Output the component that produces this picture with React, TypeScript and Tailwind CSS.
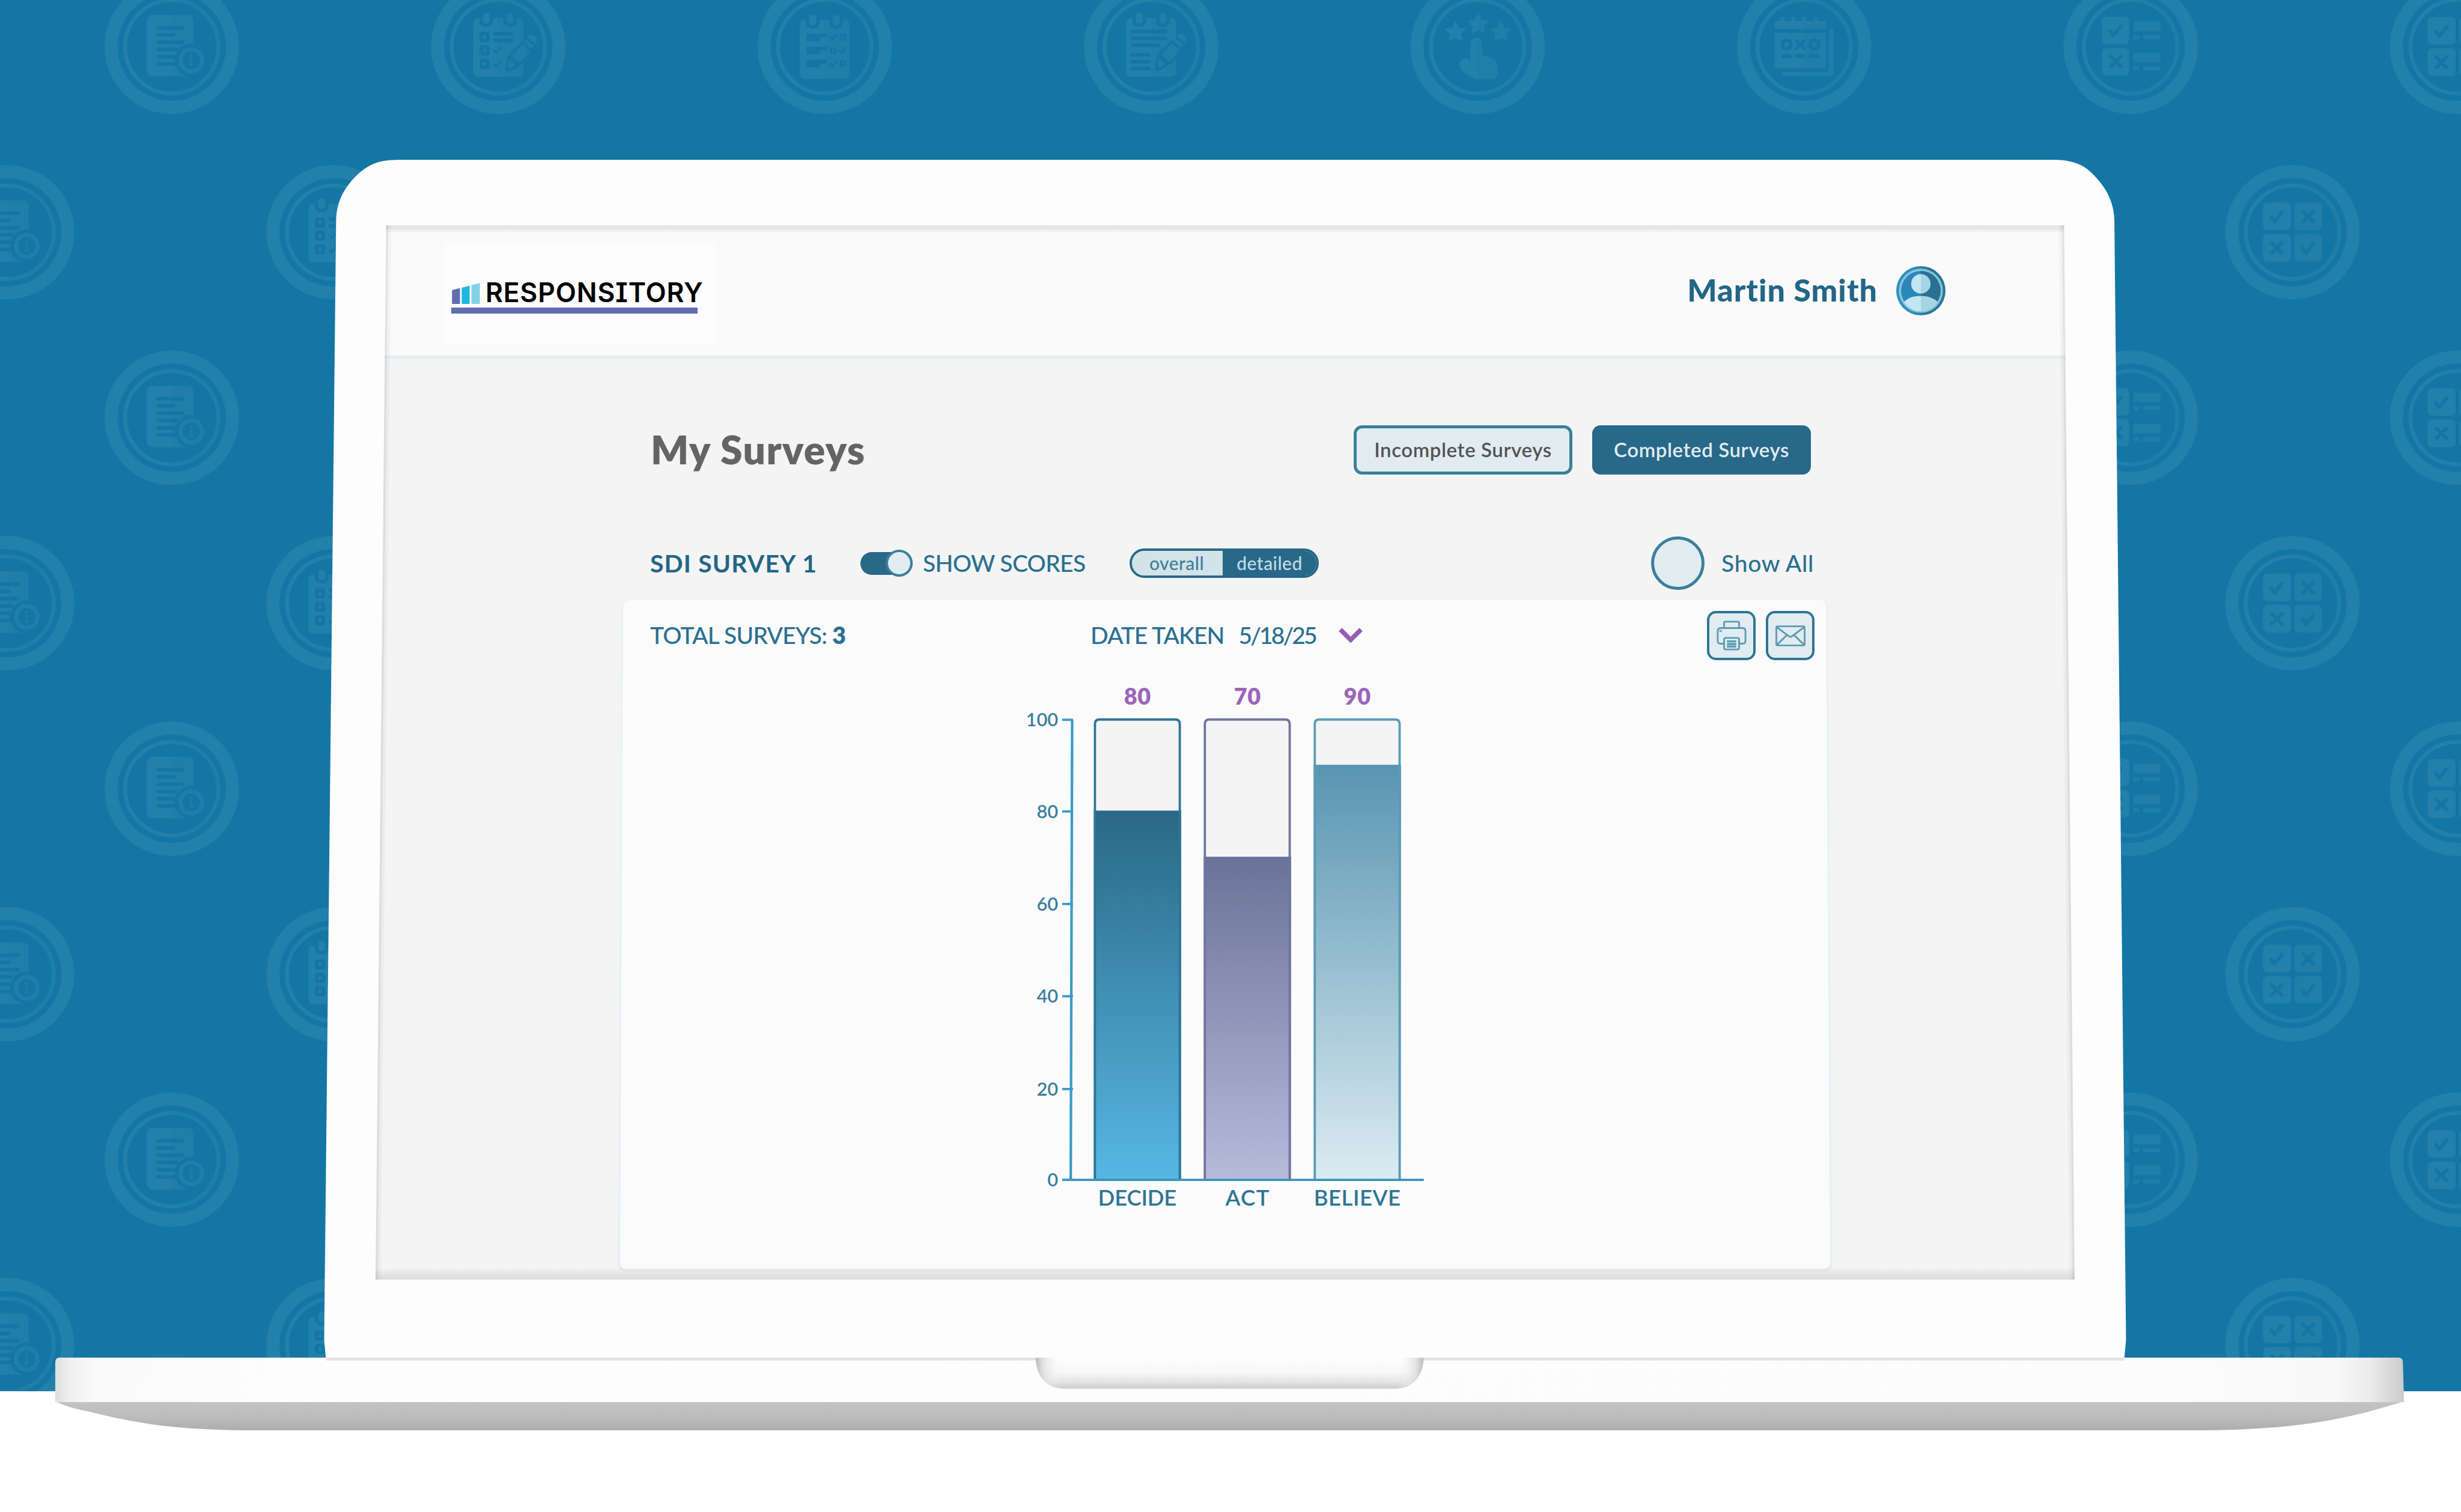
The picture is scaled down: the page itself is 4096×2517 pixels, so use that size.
import type { ReactNode } from "react";

const BG = "#1476a4";
const MARK = "#2380aa";

/* ---------- background badges ---------- */

function Check({ x, y, s = 1 }: { x: number; y: number; s?: number }) {
  return (
    <path
      d={`M${x - 10 * s} ${y + 1 * s}l${6 * s} ${8 * s}l${13 * s} ${-16 * s}`}
      fill="none"
      stroke={BG}
      strokeWidth={6 * s}
      strokeLinecap="round"
      strokeLinejoin="round"
    />
  );
}

function Cross({ x, y, s = 1 }: { x: number; y: number; s?: number }) {
  return (
    <path
      d={`M${x - 9 * s} ${y - 9 * s}l${18 * s} ${18 * s}M${x + 9 * s} ${y - 9 * s}l${-18 * s} ${18 * s}`}
      fill="none"
      stroke={BG}
      strokeWidth={6 * s}
      strokeLinecap="round"
    />
  );
}

function Line({ x, y, w, h = 6.4 }: { x: number; y: number; w: number; h?: number }) {
  return <rect x={x} y={y} width={w} height={h} rx="2.5" fill={BG} />;
}

function Box({ x, y }: { x: number; y: number }) {
  return (
    <>
      <rect x={x - 9} y={y - 9} width="18" height="18" rx="4.5" fill={BG} />
      <rect x={x - 3} y={y - 3} width="6" height="6" rx="1" fill={MARK} />
    </>
  );
}

function Pad({ y, children }: { y: number; children: ReactNode }) {
  return (
    <>
      <rect x="-44" y={y} width="88" height="103" rx="8" fill={MARK} />
      {[-21, 20.5].map((x) => (
        <g key={x}>
          <rect x={x - 12} y={y - 9} width="24" height="24" rx="10" fill={BG} />
          <rect x={x - 6} y={y - 9} width="12" height="18.5" rx="5" fill={MARK} />
        </g>
      ))}
      {children}
    </>
  );
}

function Pencil() {
  return (
    <>
      <path d="M14 43Q12 40 13 34L16 16L44 -11L62 8L42 31L24 42Q17 45 14 43Z" fill={BG} />
      <g fill={MARK}>
        <path d="M18.5 22L31 32L20 39Q18 40 18 37Z" />
        <path d="M23 17L38 29L56 8L43 -5Z" />
        <path d="M43.5 -8.7L48 -13L62 -2L59 3.3Z" />
        <path d="M51 -16L54 -20Q59 -24 65 -18Q70 -12 65.5 -5Z" />
      </g>
    </>
  );
}

function InfoDoc() {
  return (
    <>
      <rect x="-44" y="-56" width="82" height="108" rx="10" fill={MARK} />
      <Line x={-27} y={-36.5} w={49} />
      <Line x={-27} y={-24} w={33} />
      <Line x={-27} y={-11} w={49} />
      <Line x={-27} y={1.5} w={38} />
      <Line x={-27} y={14.5} w={33} />
      <Line x={-27} y={27} w={38} />
      <circle cx="34.3" cy="24" r="29" fill={BG} />
      <circle cx="34.3" cy="24" r="19" fill="none" stroke={MARK} strokeWidth="7.5" />
      <circle cx="34" cy="16" r="2.5" fill={MARK} />
      <path d="M31 22.5h3.5v9M30.5 32h7" stroke={MARK} strokeWidth="3" fill="none" />
    </>
  );
}

function PencilChecklist() {
  return (
    <Pad y={-50}>
      {[-17, 6.5, 30].map((y) => (
        <Box key={y} x={-23.8} y={y} />
      ))}
      <Line x={-8.8} y={-26} w={35} />
      <Line x={-8.8} y={-14.3} w={35} />
      <Check x={-1.5} y={6} s={0.55} />
      <Check x={-1.5} y={30} s={0.55} />
      <Pencil />
    </Pad>
  );
}

function Checklist() {
  return (
    <Pad y={-47}>
      {[0, 23, 46].map((dy, i) => (
        <g key={dy}>
          <Line x={-32} y={-23 + dy} w={36} />
          <Line x={-32} y={-16.3 + dy} w={24} />
          <Check x={(i === 1 ? 32 : 16) - 0.5} y={-17 + dy} s={0.55} />
          <rect
            x={i === 1 ? 11.5 : 28}
            y={-20.5 + dy}
            width="8"
            height="8"
            rx="2"
            fill="none"
            stroke={BG}
            strokeWidth="3"
          />
        </g>
      ))}
    </Pad>
  );
}

function NotePencil() {
  return (
    <Pad y={-50}>
      <Line x={-36} y={-30} w={64} />
      <Line x={-36} y={-18} w={64} />
      <Line x={-36} y={-6} w={51} />
      <Line x={-36} y={11} w={35} />
      <Line x={-36} y={23} w={35} />
      <Line x={-36} y={35} w={35} />
      <g transform="translate(-6 -2)">
        <Pencil />
      </g>
    </Pad>
  );
}

function StarsHand() {
  return (
    <g fill={MARK} stroke={MARK} strokeWidth="3" strokeLinejoin="round">
      {[
        [1, -40],
        [-39, -26.5],
        [41, -26.5],
      ].map(([x, y]) => (
        <path
          key={x}
          transform={`translate(${x} ${y})`}
          d="M0 -16L5 -5.5L16.5 -4.5L8 3.5L10.5 15L0 9.5L-10.5 15L-8 3.5L-16.5 -4.5L-5 -5.5Z"
        />
      ))}
      <path
        strokeWidth="0"
        d="M-13 26V-5A10.5 10.5 0 0 1 8 -5V15C24 18 35 22 35 35V46Q34 53 28 57H-5C-14 52 -32 42 -32 32C-32 18 -17 18 -13 26Z"
      />
    </g>
  );
}

function CalendarMark() {
  return (
    <>
      <g fill={MARK}>
        {[-41.6, -22.6, -2.7, 17].map((x) => (
          <rect key={x} x={x} y="-52" width="6.5" height="9" />
        ))}
        <rect x="-51.6" y="-45" width="90" height="14" rx="1" />
        <rect x="-51.6" y="-24.5" width="90" height="62" rx="2" />
        <path d="M43.5 -32H51V46Q51 51 46 51H-38V44H39Q43.5 44 43.5 39Z" />
      </g>
      {[-31, 18].map((x) => (
        <rect key={x} x={x - 7} y="-11" width="14" height="14" rx="4" fill="none" stroke={BG} strokeWidth="6" />
      ))}
      <Cross x={-7} y={-4} s={0.8} />
      {[-40, -17, 8].map((x) => (
        <Line key={x} x={x} y={13.5} w={19} />
      ))}
    </>
  );
}

function CheckList() {
  return (
    <>
      <g fill={MARK}>
        {[-52.7, 2].map((y) => (
          <g key={y}>
            <rect x="-50.7" y={y} width="48" height="48.5" rx="8" />
            <rect x="5.4" y={y + 8.5} width="47" height="17" rx="1.5" />
            <rect x="5.4" y={y + 32.5} width="10" height="7" rx="1.5" />
            <rect x="21.7" y={y + 32.5} width="31" height="7" rx="1.5" />
          </g>
        ))}
      </g>
      <Check x={-26} y={-29} />
      <Cross x={-26} y={26} />
    </>
  );
}

function GridMark() {
  return (
    <>
      <g fill={MARK}>
        <rect x="-51.6" y="-52" width="49" height="48.5" rx="8" />
        <rect x="3" y="-52" width="49" height="48.5" rx="8" />
        <rect x="-51.6" y="3" width="49" height="48.5" rx="8" />
        <rect x="3" y="3" width="49" height="48.5" rx="8" />
      </g>
      <Check x={-27.5} y={-27.5} />
      <Cross x={27.5} y={-27.5} />
      <Cross x={-27.5} y={27.5} />
      <Check x={27.5} y={27.5} />
    </>
  );
}

const badges = [InfoDoc, PencilChecklist, Checklist, NotePencil, StarsHand, CalendarMark, CheckList, GridMark];

function Backdrop() {
  return (
    <svg className="absolute inset-x-0 top-0 h-[2316px] w-[4096px]" viewBox="0 0 4320 2442" preserveAspectRatio="none">
      <rect width="4320" height="2442" fill={BG} />
      {Array.from({ length: 8 }, (_, row) =>
        badges.map((Badge, col) => (
          <g
            key={`${row}-${col}`}
            transform={`translate(${(row % 2 ? 12.5 : 301.5) + 573.1 * col} ${82 + 325.6 * row})`}
          >
            <circle r="106.5" fill="none" stroke={MARK} strokeWidth="23" />
            <circle r="82" fill="none" stroke={MARK} strokeWidth="7" />
            <Badge />
            <path d="M0 -95A95 95 0 0 1 0 95Z" fill={BG} opacity="0.2" />
          </g>
        ))
      )}
    </svg>
  );
}

/* ---------- laptop ---------- */

function Laptop() {
  return (
    <svg className="absolute inset-0 h-[2517px] w-[4096px]" viewBox="0 0 4320 2655" preserveAspectRatio="none">
      <defs>
        <linearGradient id="under" x1="0" y1="0" x2="0" y2="1">
          <stop offset="0" stopColor="#c3c3c3" />
          <stop offset="0.5" stopColor="#bdbdbd" />
          <stop offset="1" stopColor="#adadad" />
        </linearGradient>
        <linearGradient id="deck" gradientUnits="userSpaceOnUse" x1="97" y1="0" x2="4219" y2="0">
          <stop offset="0" stopColor="#dedede" />
          <stop offset="0.006" stopColor="#efefef" />
          <stop offset="0.018" stopColor="#fafafa" />
          <stop offset="0.1" stopColor="#fdfdfd" />
          <stop offset="0.9" stopColor="#fcfcfc" />
          <stop offset="0.972" stopColor="#f8f8f8" />
          <stop offset="0.986" stopColor="#ebebeb" />
          <stop offset="1" stopColor="#cbcbcb" />
        </linearGradient>
        <linearGradient id="notch" x1="0" y1="0" x2="0" y2="1">
          <stop offset="0" stopColor="#fdfdfd" />
          <stop offset="0.45" stopColor="#f8f8f8" />
          <stop offset="0.75" stopColor="#e6e6e6" />
          <stop offset="1" stopColor="#cdcdcd" />
        </linearGradient>
        <linearGradient id="notchSides" x1="0" y1="0" x2="1" y2="0">
          <stop offset="0" stopColor="#b8b8b8" />
          <stop offset="0.02" stopColor="#d8d8d8" stopOpacity="0.7" />
          <stop offset="0.065" stopColor="#fafafa" stopOpacity="0" />
          <stop offset="0.935" stopColor="#fafafa" stopOpacity="0" />
          <stop offset="0.98" stopColor="#d8d8d8" stopOpacity="0.7" />
          <stop offset="1" stopColor="#b8b8b8" />
        </linearGradient>
      </defs>
      <path
        d="M698 280.5H3606C3640 281 3658 290 3672 304C3695 326 3710 352 3711.5 384L3732 2353L3729 2385H572L569 2353L590 384C592 350 607 324 634 301C652 286 670 281 698 280.5Z"
        fill="#fdfdfd"
      />
      <path
        d="M97 2461C123 2473 140 2475 161 2480C192 2488 222 2494 253 2499C310 2508 380 2511.5 440 2511.5H3873C3940 2511 4000 2507 4059 2499C4092 2494 4123 2488 4154 2480C4178 2473 4200 2467 4220 2461Z"
        fill="url(#under)"
      />
      <path d="M103 2384H4212Q4218 2385 4218 2393L4220 2462H97V2393Q97 2385 103 2384Z" fill="url(#deck)" />
      <path d="M572 2384H3729V2389H572Z" fill="#e2e2e2" />
      <path d="M1818 2384H2499C2499 2406 2488 2438 2449 2438.5H1868C1829 2438 1818 2406 1818 2384Z" fill="url(#notch)" />
      <path d="M1818 2384H2499C2499 2406 2488 2438 2449 2438.5H1868C1829 2438 1818 2406 1818 2384Z" fill="url(#notchSides)" />
    </svg>
  );
}

function ScreenShade() {
  return (
    <svg className="pointer-events-none absolute inset-0 h-full w-full" viewBox="0 0 2983 1850" preserveAspectRatio="none">
      <defs>
        <linearGradient id="shadeTop" x1="0" y1="0" x2="0" y2="1">
          <stop offset="0" stopColor="#000" stopOpacity="0.09" />
          <stop offset="0.4" stopColor="#000" stopOpacity="0.08" />
          <stop offset="1" stopColor="#000" stopOpacity="0" />
        </linearGradient>
        <linearGradient id="shadeBottom" x1="0" y1="1" x2="0" y2="0">
          <stop offset="0" stopColor="#000" stopOpacity="0.1" />
          <stop offset="0.35" stopColor="#000" stopOpacity="0.07" />
          <stop offset="1" stopColor="#000" stopOpacity="0" />
        </linearGradient>
      </defs>
      <rect width="2983" height="14" fill="url(#shadeTop)" />
      <rect y="1828" width="2983" height="22" fill="url(#shadeBottom)" />
      <path d="M18.5 0L0 1850" stroke="#000" strokeOpacity="0.03" strokeWidth="18" />
      <path d="M18.5 0L0 1850" stroke="#000" strokeOpacity="0.06" strokeWidth="8" />
      <path d="M2964.5 0L2983 1850" stroke="#000" strokeOpacity="0.03" strokeWidth="18" />
      <path d="M2964.5 0L2983 1850" stroke="#000" strokeOpacity="0.06" strokeWidth="8" />
    </svg>
  );
}

/* ---------- app ---------- */

function Logo() {
  return (
    <div className="ml-[115px] mt-[10px] flex h-[164px] w-[451px] flex-col bg-[#fdfdfd] pl-[12px] pt-[61px]">
      <div className="flex h-[38px] items-end">
        <svg className="h-[35px] w-[47px] shrink-0" viewBox="0 0 147 111">
          <path d="M0 38L42 27V111H0Z" fill="#5f6db3" />
          <path d="M51 25L93 14V111H51Z" fill="#20b5e2" />
          <path d="M102 12L147 0V111H102Z" fill="#86d0e6" />
        </svg>
        <span className="ml-[9px] whitespace-nowrap font-['Inter',sans-serif] text-[44.5px] font-semibold leading-[37px] tracking-[0.8px] text-black [font-feature-settings:'ss02']">
          RESPONSITORY
        </span>
      </div>
      <div className="-ml-[1px] mt-[6px] h-[10px] w-[410px] bg-[#5f6db3]" />
    </div>
  );
}

function Avatar() {
  return (
    <svg className="h-[82px] w-[82px]" viewBox="0 0 86 86">
      <defs>
        <clipPath id="avatarInner">
          <circle cx="43" cy="43" r="36" />
        </clipPath>
        <linearGradient id="avatarRim" x1="0" y1="0" x2="1" y2="0">
          <stop offset="0.3" stopColor="#2f90be" />
          <stop offset="0.7" stopColor="#2a7594" />
        </linearGradient>
      </defs>
      <circle cx="43" cy="43" r="43" fill="url(#avatarRim)" />
      <circle cx="43" cy="43" r="38.5" fill="#86c3d9" />
      <circle cx="43" cy="43" r="34.5" fill="#2a87b8" />
      <path d="M43 8.5A34.5 34.5 0 0 1 43 77.5Z" fill="#297092" />
      <g clipPath="url(#avatarInner)">
        <path d="M43 14A17 17 0 0 0 43 48Z" fill="#c2e6f2" />
        <path d="M43 14A17 17 0 0 1 43 48Z" fill="#a5d5e4" />
        <path d="M43 52Q23 52 12 64V82H43Z" fill="#c2e6f2" />
        <path d="M43 52Q63 52 74 64V82H43Z" fill="#a5d5e4" />
      </g>
    </svg>
  );
}

function Header() {
  return (
    <header className="flex h-[222px] items-center justify-between border-b-[5px] border-[#e4eef2] bg-[#fafafa] pr-[215px]">
      <Logo />
      <div className="flex items-center gap-[31px]">
        <span className="pb-[4px] text-[52px] font-black leading-[60px] tracking-[1px] text-[#236687]">
          Martin Smith
        </span>
        <Avatar />
      </div>
    </header>
  );
}

function TitleRow() {
  return (
    <div className="mt-[111px] flex h-[82px] items-center justify-between pl-[458px] pr-[439px]">
      <h1 className="pb-[3px] text-[66px] font-extrabold leading-[80px] tracking-[1.4px] text-[#646464]">My Surveys</h1>
      <div className="flex gap-[33px] tracking-[0.6px]">
        <button className="flex h-[82px] w-[364px] items-center justify-center rounded-[14px] border-[5px] border-[#3b7f9b] bg-[#e1ecf1] text-[33px] font-semibold text-[#535353]">
          Incomplete Surveys
        </button>
        <button className="flex h-[82px] w-[364px] items-center justify-center rounded-[14px] bg-[#286888] text-[33px] font-semibold text-[#e1ecf1]">
          Completed Surveys
        </button>
      </div>
    </div>
  );
}

function FilterRow() {
  return (
    <div className="mt-[103px] flex h-[89px] items-center pl-[457px] pr-[434px] text-[#2a7090]">
      <h2 className="w-[350px] text-[41px] font-bold tracking-[1.1px] text-[#236687]">SDI SURVEY 1</h2>
      <div className="flex h-[45px] w-[87px] items-center">
        <div className="flex h-[38px] w-[87px] items-center justify-end rounded-full bg-[#286888]">
          <div className="h-[45px] w-[45px] shrink-0 rounded-full border-4 border-[#3b7f9b] bg-[#e1ecf1]" />
        </div>
      </div>
      <span className="ml-[17px] w-[344px] text-[39px] font-medium tracking-[-0.7px]">SHOW SCORES</span>
      <div className="flex h-[49px] w-[315px] overflow-hidden rounded-full border-4 border-[#286888] text-[30px] font-medium leading-[40px] tracking-[0.5px]">
        <span className="w-[151px] bg-[#d3e3e9] pr-[2px] text-center text-[#3b7f9b]">overall</span>
        <span className="flex-1 bg-[#286888] text-center text-[#c4dde6]">detailed</span>
      </div>
      <div className="ml-auto flex items-center gap-[28px]">
        <div className="h-[89px] w-[89px] rounded-full border-[5px] border-[#3b7f9b] bg-[#e1ecf1]" />
        <span className="text-[39px] font-medium tracking-[0.7px]">Show All</span>
      </div>
    </div>
  );
}

function IconButton({ children }: { children: ReactNode }) {
  return (
    <button className="flex h-[82px] w-[81px] items-center justify-center rounded-[15px] border-4 border-[#2f7594] bg-[#e1ecf1]">
      {children}
    </button>
  );
}

function PrinterIcon() {
  return (
    <svg className="h-[50px] w-[50px]" viewBox="0 0 52 52" fill="none" stroke="#5d9bb3" strokeWidth="3">
      <path d="M13 13V4Q13 2 15 2H37Q39 2 39 4V13" />
      <path d="M13 40H7Q2 40 2 35V18Q2 13 7 13H45Q50 13 50 18V35Q50 40 45 40H39" />
      <path d="M5 18H9" />
      <path d="M13 33Q13 30 16 30H36Q39 30 39 33V47Q39 50 36 50H16Q13 50 13 47Z" />
      <path d="M18 36H34M18 40.5H34M18 45H34" strokeWidth="3.5" />
    </svg>
  );
}

function MailIcon() {
  return (
    <svg className="h-[35px] w-[50px]" viewBox="0 0 52 36" fill="none" stroke="#5d9bb3" strokeWidth="3">
      <rect x="1.5" y="1.5" width="49" height="33" rx="2.5" />
      <path d="M2.5 3L23 18.5Q26 20.5 29 18.5L49.5 3M2.5 33.5L20 16.5M49.5 33.5L32 16.5" />
    </svg>
  );
}

const ticks = [
  { label: "100", y: 1262.5 },
  { label: "80", y: 1423.5 },
  { label: "60", y: 1586 },
  { label: "40", y: 1748 },
  { label: "20", y: 1911 },
  { label: "0", y: 2070.5 },
];

const bars = [
  { name: "DECIDE", value: 80, x: 1920.5, top: 1422, from: "#2a6886", to: "#57b7e3", edge: "#2f7594", width: 138 },
  { name: "ACT", value: 70, x: 2113.5, top: 1503, from: "#6b7299", to: "#b7bbda", edge: "#6f769e", width: 77 },
  { name: "BELIEVE", value: 90, x: 2306.5, top: 1341.5, from: "#5895b1", to: "#dbebf2", edge: "#5b9bb5", width: 152 },
];

function Chart() {
  return (
    <svg className="ml-[658px] mt-[21px] h-[910px] w-[721px]" viewBox="1780 1180 760 960">
      <defs>
        {bars.map((bar) => (
          <linearGradient key={bar.name} id={bar.name} x1="0" y1="0" x2="0" y2="1">
            <stop offset="0" stopColor={bar.from} />
            <stop offset="1" stopColor={bar.to} />
          </linearGradient>
        ))}
      </defs>
      {bars.map((bar) => (
        <g key={bar.name}>
          <path
            d={`M${bar.x + 2} 2070V1270Q${bar.x + 2} 1262 ${bar.x + 10} 1262H${bar.x + 143}Q${bar.x + 151} 1262 ${bar.x + 151} 1270V2070Z`}
            fill="#f4f4f4"
          />
          <rect x={bar.x} y={bar.top} width="153.5" height={2070 - bar.top} fill={`url(#${bar.name})`} />
          <path
            d={`M${bar.x + 2} 2070V1270Q${bar.x + 2} 1262 ${bar.x + 10} 1262H${bar.x + 143}Q${bar.x + 151} 1262 ${bar.x + 151} 1270V2070`}
            fill="none"
            stroke={bar.edge}
            strokeWidth="4"
          />
          <text x={bar.x + 76.5} y="1236" fill="#9b66b8" fontSize="40" fontWeight="800" textAnchor="middle" textLength="47">
            {bar.value}
          </text>
          <text
            x={bar.x + 76.5}
            y="2116"
            fill="#2f7594"
            fontSize="38.5"
            fontWeight="600"
            textAnchor="middle"
            textLength={bar.width}
          >
            {bar.name}
          </text>
        </g>
      ))}
      <path d="M1882.5 1262L1880 2070" stroke="#3a9cc5" strokeWidth="4.5" />
      <path d="M1865 2070.5H2500" stroke="#3a94bb" strokeWidth="4" />
      {ticks.map((tick) => (
        <g key={tick.label}>
          <path d={`M1865 ${tick.y}H1884`} stroke="#3a9cc5" strokeWidth="4" />
          <text x="1858" y={tick.y + 11.5} fill="#3b7f9b" fontSize="32.5" fontWeight="600" textAnchor="end">
            {tick.label}
          </text>
        </g>
      ))}
    </svg>
  );
}

function SurveyCard() {
  return (
    <section className="relative ml-[404px] mt-[17px] h-[1118px] w-[2020px]">
      <svg className="absolute inset-0 h-full w-full" viewBox="0 0 2126 1180" preserveAspectRatio="none">
        <path
          d="M20 0H2104Q2118 0 2118 14L2126 1166Q2126 1180 2112 1180H14Q0 1180 0 1166L6 14Q6 0 20 0Z"
          fill="#e4eef3"
        />
        <path
          d="M20 0H2104Q2116 0 2116 14L2123 1161Q2123 1175 2110 1175H15Q3 1175 3 1161L8 14Q8 0 20 0Z"
          fill="#fbfbfb"
        />
      </svg>
      <div className="relative pt-[18px]">
        <div className="flex h-[82px] items-center pl-[53px] pr-[29px] text-[39px] font-medium leading-[56px] text-[#2a7090]">
          <span className="w-[733px] pb-[3px] tracking-[-0.8px]">
            TOTAL SURVEYS: <b className="font-extrabold">3</b>
          </span>
          <span className="pb-[3px] tracking-[-1px]">DATE TAKEN</span>
          <span className="ml-[24px] pb-[3px] tracking-[-2.9px]">5/18/25</span>
          <svg className="ml-[37px] h-[28px] w-[42px]" viewBox="0 0 44 29">
            <path d="M4 4L22 22L40 4" fill="none" stroke="#9560b2" strokeWidth="8" />
          </svg>
          <div className="ml-auto flex gap-[17px]">
            <IconButton>
              <PrinterIcon />
            </IconButton>
            <IconButton>
              <MailIcon />
            </IconButton>
          </div>
        </div>
        <Chart />
      </div>
    </section>
  );
}

export default function App() {
  return (
    <main className="relative h-[2517px] w-[4096px] overflow-hidden bg-white pl-[625px] pt-[375px] font-['Lato',sans-serif]">
      <Backdrop />
      <Laptop />
      <div className="relative h-[1755px] w-[2828px] bg-[#f4f4f4] [clip-path:polygon(0.62%_0,99.38%_0,100%_100%,0_100%)]">
        <Header />
        <TitleRow />
        <FilterRow />
        <SurveyCard />
        <ScreenShade />
      </div>
    </main>
  );
}
